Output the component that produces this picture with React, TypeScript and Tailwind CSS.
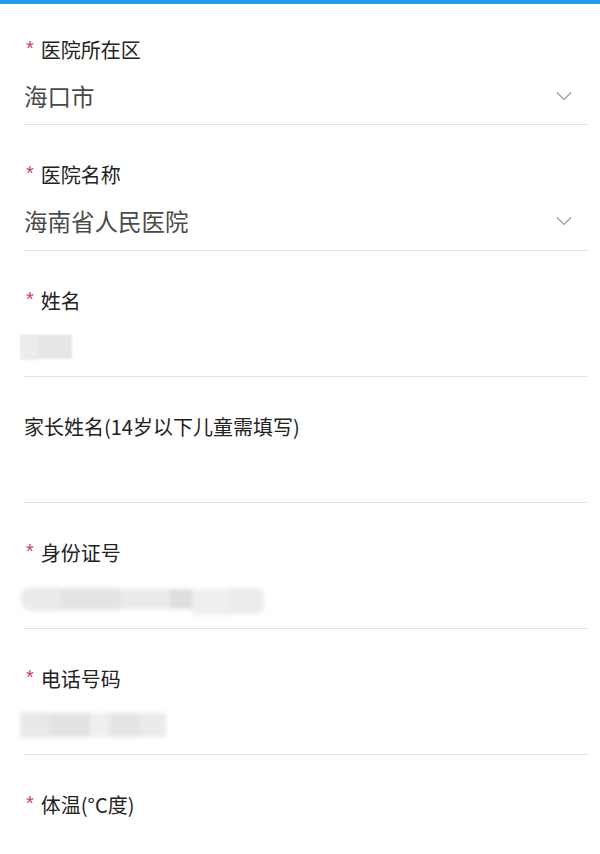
import React from "react";

const font = { fontFamily: '"Noto Sans CJK SC", "Noto Sans", sans-serif' };

function Chevron() {
  return (
    <svg width="16" height="10" viewBox="0 0 16 10" className="mr-[28px]">
      <path d="M1 1.5 L8 8.5 L15 1.5" fill="none" stroke="#9a9a9a" strokeWidth="1.2" />
    </svg>
  );
}

function Label({ text, required = true }: { text: string; required?: boolean }) {
  return (
    <div className="flex h-[28px] items-center text-[20px] leading-[28px] text-[#222]">
      {required && (
        <span
          className="mr-[7px] ml-[2px] text-[20px] leading-none text-[#c8475e] -translate-y-[2px]"
          style={{ fontFamily: '"Liberation Sans", sans-serif' }}
        >
          *
        </span>
      )}
      <span>{text}</span>
    </div>
  );
}

function Section({
  label,
  required = true,
  first = false,
  children,
}: {
  label: string;
  required?: boolean;
  first?: boolean;
  children?: React.ReactNode;
}) {
  return (
    <div className={first ? "pl-[24px] pt-[32px]" : "pl-[24px] pt-[36px]"}>
      <Label text={label} required={required} />
      <div className="mt-[16px] h-[32px] flex items-center">{children}</div>
      <div className={first ? "h-[13px] mr-[12px] border-b border-[#e3e3e3]" : "h-[14px] mr-[12px] border-b border-[#e3e3e3]"} />
    </div>
  );
}

function SelectValue({ text }: { text: string }) {
  return (
    <div className="flex w-full items-center justify-between">
      <span className="text-[23.5px] leading-[32px] text-[#4a4a4a]">{text}</span>
      <Chevron />
    </div>
  );
}

export default function App() {
  return (
    <div className="h-[854px] w-[600px] overflow-hidden bg-white" style={font}>
      <div className="h-[4px] w-full bg-[#1c9cea]" />
      <Section label="医院所在区" first>
        <SelectValue text="海口市" />
      </Section>
      <Section label="医院名称">
        <SelectValue text="海南省人民医院" />
      </Section>
      <Section label="姓名">
        <div className="-ml-[4px] flex h-[28px] items-center blur-[1px]">
          <div className="h-[26px] w-[18px] bg-[#ececec]" />
          <div className="h-[24px] w-[34px] bg-[#e6e6e6]" />
        </div>
      </Section>
      <Section label="家长姓名(14岁以下儿童需填写)" required={false} />
      <Section label="身份证号">
        <div className="-ml-[4px] flex h-[34px] items-center blur-[2px]">
          <div className="h-[24px] w-[40px] rounded-l-full bg-[#ebebeb]" />
          <div className="h-[22px] w-[60px] bg-[#e4e4e4]" />
          <div className="h-[20px] w-[50px] bg-[#eaeaea]" />
          <div className="h-[20px] w-[22px] bg-[#dedede]" />
          <div className="h-[26px] w-[36px] translate-y-[3px] bg-[#efefef]" />
          <div className="h-[26px] w-[36px] translate-y-[2px] rounded-r-lg bg-[#ececec]" />
        </div>
      </Section>
      <Section label="电话号码">
        <div className="-ml-[4px] flex h-[30px] items-center blur-[2px]">
          <div className="h-[26px] w-[30px] bg-[#e9e9e9]" />
          <div className="h-[24px] w-[40px] bg-[#e2e2e2]" />
          <div className="h-[24px] w-[20px] bg-[#efefef]" />
          <div className="h-[24px] w-[30px] bg-[#e4e4e4]" />
          <div className="h-[24px] w-[26px] bg-[#ebebeb]" />
        </div>
      </Section>
      <Section label="体温(°C度)" />
    </div>
  );
}
